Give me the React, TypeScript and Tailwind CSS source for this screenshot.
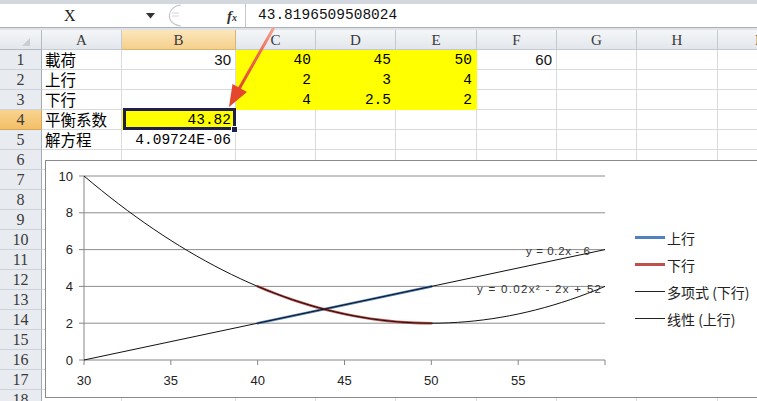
import React from 'react';

type Cell = { t: string; kind: 'cjk' | 'num' | 'sans'; yellow?: boolean; sel?: boolean };

const cols = [
  { k: 'A', w: 'w-[80px]' },
  { k: 'B', w: 'w-[114px]' },
  { k: 'C', w: 'w-[80px]' },
  { k: 'D', w: 'w-[80px]' },
  { k: 'E', w: 'w-[81px]' },
  { k: 'F', w: 'w-[80px]' },
  { k: 'G', w: 'w-[80px]' },
  { k: 'H', w: 'w-[81px]' },
  { k: 'I', w: 'w-[80px]' },
];

const data: Record<number, Record<string, Cell>> = {
  1: {
    A: { t: '載荷', kind: 'cjk' },
    B: { t: '30', kind: 'sans' },
    C: { t: '40', kind: 'num', yellow: true },
    D: { t: '45', kind: 'num', yellow: true },
    E: { t: '50', kind: 'num', yellow: true },
    F: { t: '60', kind: 'sans' },
  },
  2: {
    A: { t: '上行', kind: 'cjk' },
    C: { t: '2', kind: 'num', yellow: true },
    D: { t: '3', kind: 'num', yellow: true },
    E: { t: '4', kind: 'num', yellow: true },
  },
  3: {
    A: { t: '下行', kind: 'cjk' },
    C: { t: '4', kind: 'num', yellow: true },
    D: { t: '2.5', kind: 'num', yellow: true },
    E: { t: '2', kind: 'num', yellow: true },
  },
  4: {
    A: { t: '平衡系数', kind: 'cjk' },
    B: { t: '43.82', kind: 'num', yellow: true, sel: true },
  },
  5: {
    A: { t: '解方程', kind: 'cjk' },
    B: { t: '4.09724E-06', kind: 'num' },
  },
};

const X = (v: number) => 84 + 17.367 * (v - 30);
const Y = (v: number) => 360 - 18.4 * v;
const poly = (v: number) => 0.02 * v * v - 2 * v + 52;

function pathFor(a: number, b: number) {
  const pts: string[] = [];
  for (let v = a; v <= b + 0.001; v += 0.5) {
    pts.push(`${pts.length ? 'L' : 'M'}${X(v).toFixed(2)} ${Y(poly(v)).toFixed(2)}`);
  }
  return pts.join(' ');
}

function SheetCell({ c, w, cell }: { c: string; w: string; cell?: Cell }) {
  const yellow = cell?.yellow;
  const base = `${w} shrink-0 h-full border-r border-b relative flex items-center`;
  const color = yellow ? 'bg-[#ffff00] border-[#ffff00]' : 'bg-white border-[#d8dadd]';
  let content: React.ReactNode = null;
  if (cell) {
    if (cell.kind === 'cjk') {
      content = (
        <span className="pl-[3px] font-['Noto_Sans_CJK_SC',sans-serif] text-[15.5px] leading-[19px] text-black whitespace-nowrap">
          {cell.t}
        </span>
      );
    } else if (cell.kind === 'sans') {
      content = (
        <span className="ml-auto pr-[4px] font-['Liberation_Sans',sans-serif] text-[15px] leading-[20px] text-[#111]">
          {cell.t}
        </span>
      );
    } else {
      content = (
        <span className="ml-auto pr-[4px] font-['Liberation_Mono',monospace] text-[14.5px] leading-[20px] text-[#000] whitespace-nowrap">
          {cell.t}
        </span>
      );
    }
  }
  return (
    <div className={`${base} ${color}`} data-col={c}>
      {content}
      {cell?.sel && (
        <>
          <div className="absolute -top-[2px] left-[1px] -right-[1px] -bottom-[1px] border-[3px] border-[#1f1f4d] z-10" />
          <div className="absolute -right-[3px] -bottom-[4px] w-[7px] h-[7px] bg-[#1f1f4d] border border-white z-10" />
        </>
      )}
    </div>
  );
}

export default function App() {
  const rows = Array.from({ length: 18 }, (_, i) => i + 1);
  return (
    <div className="relative w-[757px] h-[401px] overflow-hidden bg-white">
      {/* top strip */}
      <div className="h-[4px] bg-[#d3d8de]" />
      {/* formula bar */}
      <div className="flex h-[24px] bg-white border-b border-[#a9b0b8]">
        <div className="w-[157px] shrink-0 relative flex items-center">
          <span className="pl-[64px] font-['Liberation_Serif',serif] text-[16px] text-[#222]">X</span>
          <svg className="absolute left-[146px] top-[9px]" width="9" height="6" viewBox="0 0 9 6">
            <path d="M0 0 L9 0 L4.5 5.5 Z" fill="#333" />
          </svg>
        </div>
        <div className="w-[88px] shrink-0 relative flex items-center">
          <svg className="absolute left-[2px] top-0" width="34" height="23" viewBox="0 0 34 23">
            <path d="M22 1 C 8 2, 5 20, 22 22" fill="none" stroke="#c4c9d0" strokeWidth="1.2" />
            <path d="M13 9 L20 9 M13 12 L20 12" stroke="#d3d7dc" strokeWidth="1.2" />
          </svg>
          <span className="absolute left-[70px] top-[1px] font-['Liberation_Serif',serif] italic font-bold text-[15px] text-[#333]">
            f<span className="text-[10px] align-baseline">x</span>
          </span>
        </div>
        <div className="flex-1 border-l border-[#c3c8ce] pl-[12px] flex items-center">
          <span className="font-['Liberation_Mono',monospace] text-[14.5px] text-[#111]">43.8196509508024</span>
        </div>
      </div>
      <div className="h-[2px] bg-[#dfe3e8]" />
      {/* column headers */}
      <div className="flex h-[20px]">
        <div className="w-[42px] shrink-0 h-full relative bg-gradient-to-b from-[#f4f6f8] to-[#e3e7ec] border-r border-b border-[#b3bac2]">
          <svg className="absolute left-[22px] top-[8px]" width="8" height="8" viewBox="0 0 8 8">
            <path d="M8 0 L8 8 L0 8 Z" fill="#c9ced4" />
          </svg>
        </div>
        {cols.map((c) => (
          <div
            key={c.k}
            className={`${c.w} shrink-0 h-full flex items-center justify-center border-r border-b ${
              c.k === 'B'
                ? 'bg-gradient-to-b from-[#fbe6bb] to-[#f5d08c] border-[#d9b46e]'
                : 'bg-gradient-to-b from-[#f4f6f8] to-[#e3e7ec] border-[#c3c9d0]'
            }`}
          >
            <span className="font-['Liberation_Serif',serif] text-[15px] leading-[20px] text-[#3a3a3a]">{c.k}</span>
          </div>
        ))}
      </div>
      {/* rows */}
      {rows.map((r) => (
        <div key={r} className="flex h-[20px]">
          <div
            className={`w-[42px] shrink-0 h-full flex items-center justify-center border-r border-b ${
              r === 4
                ? 'bg-gradient-to-b from-[#f9d48f] to-[#f3bf68] border-[#d4a65a]'
                : 'bg-[#e8ebef] border-r-[#a3abb4] border-b-[#cdd3da]'
            }`}
          >
            <span className="font-['Liberation_Serif',serif] text-[16px] leading-[20px] text-[#3a3a3a]">{r}</span>
          </div>
          {cols.map((c) => (
            <SheetCell key={c.k} c={c.k} w={c.w} cell={data[r]?.[c.k]} />
          ))}
        </div>
      ))}

      {/* chart object */}
      <div className="absolute left-[45px] top-[160px] w-[740px] h-[238px] border border-[#8a8a8a] bg-white flex z-20">
        <svg width="569" height="236" viewBox="46 161 569 236" className="shrink-0">
          {[2, 4, 6, 8, 10].map((v) => (
            <line key={v} x1={84} x2={605} y1={Y(v)} y2={Y(v)} stroke="#8e8e8e" strokeWidth="1" />
          ))}
          <line x1={84} x2={84} y1={176} y2={360} stroke="#868686" strokeWidth="1" />
          <line x1={84} x2={605} y1={360} y2={360} stroke="#868686" strokeWidth="1" />
          {[0, 2, 4, 6, 8, 10].map((v) => (
            <line key={v} x1={79} x2={84} y1={Y(v)} y2={Y(v)} stroke="#868686" />
          ))}
          {[30, 35, 40, 45, 50, 55, 60].map((v) => (
            <line key={v} x1={X(v)} x2={X(v)} y1={360} y2={365} stroke="#868686" />
          ))}
          {[0, 2, 4, 6, 8, 10].map((v) => (
            <text
              key={v}
              x={73}
              y={Y(v) + 4.5}
              textAnchor="end"
              fontFamily="Liberation Sans, sans-serif"
              fontSize="13"
              fill="#222"
            >
              {v}
            </text>
          ))}
          {[30, 35, 40, 45, 50, 55].map((v) => (
            <text
              key={v}
              x={X(v)}
              y={384.5}
              textAnchor="middle"
              fontFamily="Liberation Sans, sans-serif"
              fontSize="13"
              fill="#222"
            >
              {v}
            </text>
          ))}
          <line x1={X(40)} y1={Y(2)} x2={X(50)} y2={Y(4)} stroke="#4a7ebb" strokeWidth="2.6" strokeLinecap="round" />
          <path d={pathFor(40, 50)} fill="none" stroke="#be4b48" strokeWidth="2.6" strokeLinecap="round" />
          <path d={pathFor(30, 60)} fill="none" stroke="#111" strokeWidth="1" />
          <line x1={X(30)} y1={Y(0)} x2={X(60)} y2={Y(6)} stroke="#111" strokeWidth="1" />
          <text x={526} y={255} fontFamily="Liberation Sans, sans-serif" fontSize="11.5" fill="#333" textLength="64">
            y = 0.2x - 6
          </text>
          <text x={477} y={293} fontFamily="Liberation Sans, sans-serif" fontSize="11.5" fill="#333" textLength="124">
            y = 0.02x² - 2x + 52
          </text>
        </svg>
        <div className="ml-[20px] pt-[63px] flex flex-col">
          {[
            { t: '上行', line: 'h-[3px] bg-[#4f81bd]' },
            { t: '下行', line: 'h-[3px] bg-[#c0504d]' },
            { t: '多项式 (下行)', line: 'h-[1px] bg-[#222]' },
            { t: '线性 (上行)', line: 'h-[1px] bg-[#222]' },
          ].map((it) => (
            <div key={it.t} className="h-[27px] flex items-center">
              <div className={`w-[30px] ${it.line}`} />
              <span className="ml-[2px] font-['Noto_Sans_CJK_SC',sans-serif] text-[14px] leading-[18px] text-[#222] whitespace-nowrap">
                {it.t}
              </span>
            </div>
          ))}
        </div>
      </div>

      {/* red arrow annotation */}
      <svg className="absolute left-0 top-0 pointer-events-none z-30" width="757" height="401" viewBox="0 0 757 401">
        <defs>
          <linearGradient id="arrowGrad" x1="273" y1="29" x2="240" y2="88" gradientUnits="userSpaceOnUse">
            <stop offset="0" stopColor="#f4a393" />
            <stop offset="0.4" stopColor="#ec6a52" />
            <stop offset="1" stopColor="#e4482e" />
          </linearGradient>
        </defs>
        <line x1="273" y1="29" x2="239" y2="89" stroke="url(#arrowGrad)" strokeWidth="3" strokeLinecap="round" />
        <polygon points="229,107 247,92 232.5,84" fill="#e4472d" />
      </svg>
    </div>
  );
}
